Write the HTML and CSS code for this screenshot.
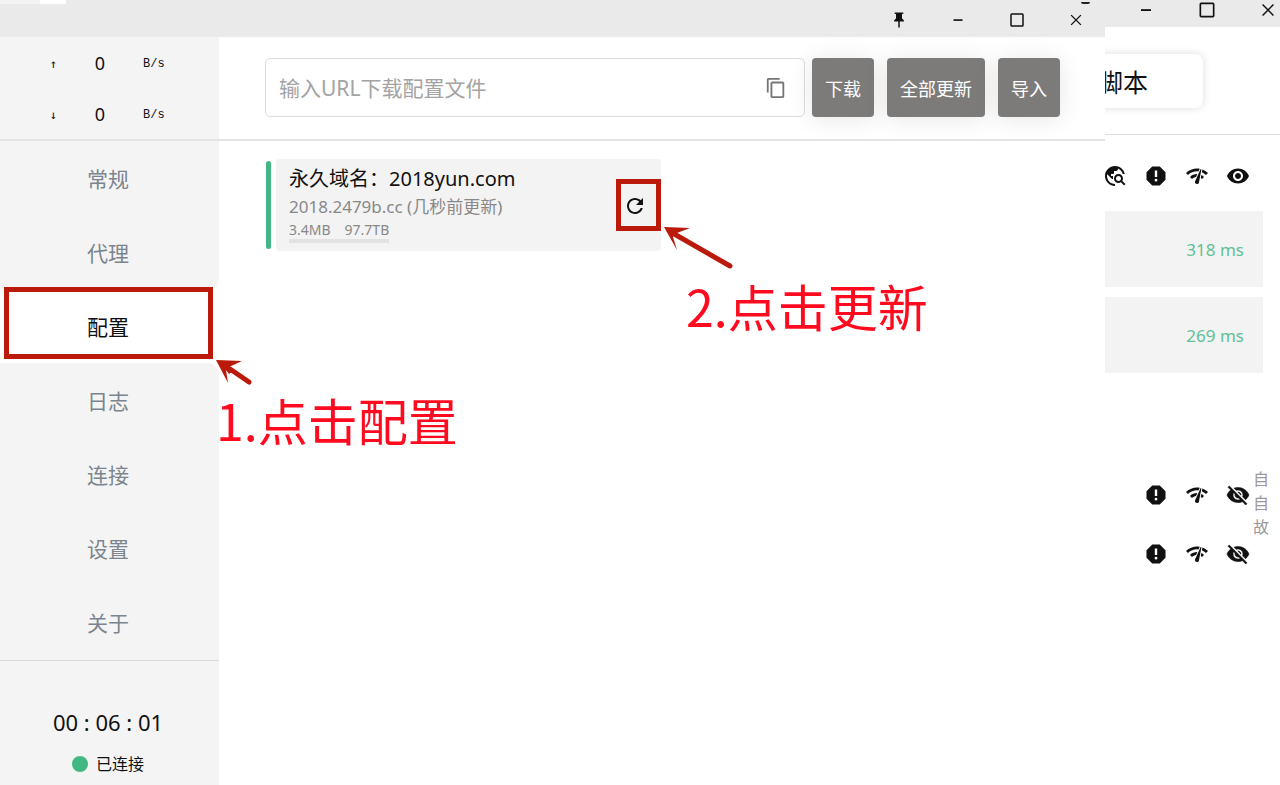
FILE: index.html
```html
<!DOCTYPE html>
<html lang="zh-CN">
<head>
<meta charset="utf-8">
<title>配置</title>
<link rel="stylesheet" href="styles.css">
</head>
<body>
<svg class="defs" aria-hidden="true">
  <symbol id="pin" viewBox="0 0 24 24"><path d="M16 10V4h1c.6 0 1-.5 1-1s-.4-1-1-1H7c-.6 0-1 .5-1 1s.4 1 1 1h1v6l-2.500 2.200V14H11v8h2v-8h5.500v-1.800z"/></symbol>
  <symbol id="min" viewBox="0 0 24 24"><path d="M6 11h12v2.200H6z"/></symbol>
  <symbol id="max" viewBox="0 0 24 24"><rect x="4" y="4" width="16" height="16" rx="1" fill="none" stroke="currentColor" stroke-width="2"/></symbol>
  <symbol id="close" viewBox="0 0 24 24"><path d="M5.500 5.500l13 13M18.500 5.500l-13 13" fill="none" stroke="currentColor" stroke-width="1.800"/></symbol>
  <symbol id="copy" viewBox="0 0 24 24"><path d="M16 1H4c-1.100 0-2 .9-2 2v14h2V3h12V1zm3 4H8c-1.100 0-2 .9-2 2v14c0 1.100.9 2 2 2h11c1.100 0 2-.9 2-2V7c0-1.100-.9-2-2-2zm0 16H8V7h11v14z"/></symbol>
  <symbol id="refresh" viewBox="0 0 24 24"><path d="M17.650 6.350C16.200 4.900 14.210 4 12 4c-4.420 0-7.990 3.580-7.990 8s3.570 8 7.990 8c3.730 0 6.840-2.550 7.730-6h-2.080c-.82 2.330-3.040 4-5.650 4-3.310 0-6-2.690-6-6s2.690-6 6-6c1.660 0 3.140.69 4.220 1.780L13 11h7V4l-2.350 2.350z"/></symbol>
  <symbol id="explore" viewBox="0 0 24 24"><path d="M19.300 16.900c.4-.7.7-1.500.7-2.400 0-2.500-2-4.500-4.500-4.500S11 12 11 14.500s2 4.500 4.500 4.500c.9 0 1.700-.3 2.400-.7l3.200 3.200 1.400-1.400-3.200-3.200zm-3.800.1c-1.400 0-2.500-1.100-2.500-2.500s1.100-2.500 2.500-2.500 2.500 1.100 2.500 2.500-1.100 2.500-2.500 2.500zM12 20v2C6.480 22 2 17.520 2 12S6.480 2 12 2c4.840 0 8.870 3.440 9.800 8h-2.070c-.64-2.460-2.400-4.470-4.730-5.410V5c0 1.100-.9 2-2 2h-2v2c0 .55-.45 1-1 1H8v2h2v3H9l-4.790-4.790C4.080 10.790 4 11.380 4 12c0 4.410 3.590 8 8 8z"/></symbol>
  <symbol id="report" viewBox="0 0 24 24"><path fill-rule="evenodd" d="M15.730 2.500H8.270L2.500 8.270v7.460l5.770 5.770h7.460l5.770-5.770V8.270zM12 17.600a1.400 1.400 0 1 1 0-2.800 1.400 1.400 0 0 1 0 2.800zM13.200 13h-2.400V6.500h2.400z"/></symbol>
  <symbol id="speed" viewBox="0 0 24 24"><path d="M15.900 5c-.17 0-.32.09-.41.23l-.07.15-5.180 11.650c-.16.29-.26.61-.26.96 0 1.110.9 2.010 2.010 2.010.96 0 1.770-.68 1.960-1.590l.01-.03L16.400 5.500c0-.28-.22-.5-.5-.5zM1 9l2 2c2.880-2.880 6.790-4.080 10.530-3.620l1.190-2.680C9.890 3.840 4.740 5.270 1 9zm20 2l2-2c-1.640-1.640-3.550-2.820-5.590-3.570l-.53 2.820c1.500.62 2.900 1.530 4.120 2.750zm-4 4l2-2c-.8-.8-1.700-1.420-2.660-1.890l-.55 2.920c.42.27.83.59 1.210.97zM5 13l2 2c1.130-1.130 2.560-1.790 4.030-2l1.280-2.880c-2.630-.08-5.300.87-7.310 2.880z"/></symbol>
  <symbol id="eye" viewBox="0 0 24 24"><path d="M12 4.500C7 4.500 2.730 7.610 1 12c1.730 4.390 6 7.500 11 7.500s9.270-3.110 11-7.500c-1.730-4.390-6-7.500-11-7.500zM12 17c-2.760 0-5-2.240-5-5s2.240-5 5-5 5 2.240 5 5-2.240 5-5 5zm0-8c-1.660 0-3 1.340-3 3s1.340 3 3 3 3-1.340 3-3-1.340-3-3-3z"/></symbol>
  <symbol id="eyeoff" viewBox="0 0 24 24"><path stroke="currentColor" stroke-width=".6" d="M12 7c2.760 0 5 2.240 5 5 0 .65-.13 1.260-.36 1.830l2.920 2.920c1.510-1.260 2.700-2.890 3.430-4.750-1.730-4.390-6-7.500-11-7.500-1.400 0-2.740.25-3.980.7l2.160 2.160C10.740 7.130 11.350 7 12 7zM2 4.270l2.280 2.280.46.46C3.080 8.300 1.780 10.020 1 12c1.730 4.390 6 7.500 11 7.500 1.550 0 3.030-.3 4.380-.84l.42.42L19.730 22 21 20.730 3.270 3 2 4.270zM7.530 9.800l1.550 1.550c-.05.21-.08.43-.08.65 0 1.660 1.340 3 3 3 .22 0 .44-.03.65-.08l1.550 1.550c-.67.33-1.410.53-2.200.53-2.760 0-5-2.240-5-5 0-.79.2-1.530.53-2.200zm4.310-.78l3.150 3.150.02-.16c0-1.660-1.340-3-3-3l-.17.01z"/></symbol>
</svg>

<div class="desktop">
  <section class="app">
    <header class="titlebar">
      <span class="tab-edge"></span>
      <span class="dash-edge"></span>
      <button class="win-btn" aria-label="置顶"><svg class="i18"><use href="#pin"/></svg></button>
      <button class="win-btn" aria-label="最小化"><svg class="i18"><use href="#min"/></svg></button>
      <button class="win-btn" aria-label="最大化"><svg class="i18"><use href="#max"/></svg></button>
      <button class="win-btn" aria-label="关闭"><svg class="i18"><use href="#close"/></svg></button>
    </header>

    <div class="body">
      <aside class="sidebar">
        <div class="traffic">
          <div class="rate"><span>↑</span><b>0</b><span>B/s</span></div>
          <div class="rate"><span>↓</span><b>0</b><span>B/s</span></div>
        </div>
        <nav class="nav">
          <a href="#general">常规</a>
          <a href="#proxies" class="before-active">代理</a>
          <a href="#profiles" class="active">配置</a>
          <a href="#logs" class="after-active">日志</a>
          <a href="#connections">连接</a>
          <a href="#settings">设置</a>
          <a href="#about">关于</a>
        </nav>
        <div class="status">
          <div class="clock">00 : 06 : 01</div>
          <div class="connected"><i class="dot"></i>已连接</div>
        </div>
      </aside>

      <main class="main">
        <form class="toolbar">
          <div class="url-box">
            <input type="text" placeholder="输入URL下载配置文件" aria-label="输入URL下载配置文件">
            <button type="button" class="copy" aria-label="粘贴"><svg class="i22"><use href="#copy"/></svg></button>
          </div>
          <div class="actions">
            <button type="button">下载</button>
            <button type="button">全部更新</button>
            <button type="button">导入</button>
          </div>
        </form>
        <article class="profile">
          <div class="mark"></div>
          <div class="card">
            <div class="info">
              <h2>永久域名：2018yun.com</h2>
              <p class="source">2018.2479b.cc (几秒前更新)</p>
              <p class="usage"><span>3.4MB</span><span>97.7TB</span></p>
            </div>
            <button class="refresh" aria-label="更新"><svg class="i24"><use href="#refresh"/></svg></button>
          </div>
        </article>
      </main>
    </div>

    <div class="frame frame-nav"></div>
    <div class="frame frame-refresh"></div>
    <svg class="arrow arrow-nav" viewBox="0 0 38 28"><path d="M33 23L14 10" stroke="#bb1a0b" stroke-width="5" stroke-linecap="round"/><path d="M0 1L26 2L13 8L17 12L13 15L10 11L12 24z" fill="#bb1a0b"/></svg>
    <svg class="arrow arrow-refresh" viewBox="0 0 72 44"><path d="M66 39L12 8" stroke="#bb1a0b" stroke-width="5" stroke-linecap="round"/><path d="M0 0L26 1L13 6L9 10L13 23z" fill="#bb1a0b"/></svg>
    <p class="note note-nav">1.点击配置</p>
    <p class="note note-refresh">2.点击更新</p>
  </section>

  <section class="back">
    <header class="back-bar">
      <button class="win-btn" aria-label="最小化"><svg class="i20"><use href="#min"/></svg></button>
      <button class="win-btn" aria-label="最大化"><svg class="i20"><use href="#max"/></svg></button>
      <button class="win-btn" aria-label="关闭"><svg class="i20"><use href="#close"/></svg></button>
    </header>
    <div class="modes"><button>脚本</button></div>
    <div class="tools tools-top">
      <svg class="i24"><use href="#explore"/></svg><svg class="i24"><use href="#report"/></svg><svg class="i24"><use href="#speed"/></svg><svg class="i24"><use href="#eye"/></svg>
    </div>
    <div class="nodes">
      <div class="node">318 ms</div>
      <div class="node">269 ms</div>
    </div>
    <div class="groups">
      <div class="tools">
        <svg class="i24"><use href="#report"/></svg><svg class="i24"><use href="#speed"/></svg><svg class="i24"><use href="#eyeoff"/></svg>
      </div>
      <div class="tools">
        <svg class="i24"><use href="#report"/></svg><svg class="i24"><use href="#speed"/></svg><svg class="i24"><use href="#eyeoff"/></svg>
      </div>
      <div class="anchors"><span>自</span><span>自</span><span>故</span></div>
    </div>
  </section>
</div>
</body>
</html>
```

FILE: styles.css
```css
* { box-sizing: border-box; }

body {
  margin: 0;
  background: #fff;
  color: #111;
  font-family: "Noto Sans", "Noto Sans CJK SC", sans-serif;
}

button {
  border: 0;
  padding: 0;
  background: none;
  color: inherit;
  font: inherit;
}

p, h2 { margin: 0; font-weight: 400; }

svg { display: block; flex: none; fill: currentColor; }
.defs { display: none; }
.i18 { width: 18px; height: 18px; }
.i20 { width: 20px; height: 20px; }
.i22 { width: 22px; height: 22px; }
.i24 { width: 24px; height: 24px; }

.desktop { display: flex; min-height: 100vh; overflow: hidden; }

/* front window */
.app {
  position: relative;
  flex: 1;
  min-width: 0;
  display: flex;
  flex-direction: column;
}

.titlebar {
  position: relative;
  height: 37px;
  display: flex;
  justify-content: flex-end;
  align-items: center;
  gap: 41px;
  padding: 3px 20px 0 0;
  background: #eaeaea;
}

.tab-edge {
  position: absolute;
  left: 0;
  top: 0;
  width: 66px;
  height: 4px;
  background: linear-gradient(90deg, #f3f3f3 40px, #fff 40px);
}

.dash-edge {
  position: absolute;
  right: 15px;
  top: 2px;
  width: 9px;
  height: 2px;
  border-radius: 0 0 2px 2px;
  background: #222;
}

.body { flex: 1; display: flex; }

.sidebar {
  flex: none;
  width: 219px;
  display: flex;
  flex-direction: column;
}

.traffic {
  height: 104px;
  border-bottom: 2px solid #e3e3e3;
  background: #f4f4f4;
}

.rate {
  height: 51px;
  display: grid;
  grid-template-columns: 12px 18px 24px;
  gap: 34px;
  align-items: center;
  padding-left: 45px;
  font-family: "Liberation Mono", "DejaVu Sans Mono", monospace;
  font-size: 12px;
}

.rate span { padding-top: 3px; }
.rate span:first-child { font-family: "DejaVu Sans Mono", monospace; text-align: right; }
.rate b { font: 400 18px "Noto Sans", sans-serif; text-align: center; }

.nav { height: 519px; display: flex; flex-direction: column; }

.nav a {
  flex: 1;
  display: flex;
  align-items: center;
  justify-content: center;
  padding: 0 3px 1px 0;
  background: #f4f4f4;
  color: #7b858e;
  font-size: 21px;
  text-decoration: none;
}

.nav .active { background: #fff; color: #111; }
.nav .before-active { border-bottom-right-radius: 12px; }
.nav .after-active { border-top-right-radius: 12px; }

.status {
  flex: 1;
  display: flex;
  flex-direction: column;
  align-items: center;
  gap: 12px;
  padding: 46px 3px 0 0;
  border-top: 1px solid #d8d8d8;
  background: #f4f4f4;
}

.clock { font-size: 22px; line-height: 30px; }
.connected { display: flex; align-items: center; gap: 8px; font-size: 16px; line-height: 30px; }
.dot { width: 16px; height: 16px; border-radius: 50%; background: #41b883; }

.main { flex: 1; min-width: 0; }

.toolbar {
  height: 104px;
  display: flex;
  align-items: flex-start;
  gap: 7px;
  padding: 21px 45px 0 46px;
  border-bottom: 2px solid #e3e3e3;
}

.url-box {
  flex: 1;
  height: 59px;
  display: flex;
  align-items: center;
  padding: 0 17px 0 13px;
  border: 1px solid #dcdcdc;
  border-radius: 5px;
}

.url-box input {
  flex: 1;
  min-width: 0;
  border: 0;
  padding: 0;
  outline: 0;
  background: none;
  font: inherit;
  font-size: 21px;
}

.url-box input::placeholder { color: #a3a3a3; opacity: 1; }
.copy { color: #757575; }

.actions { display: flex; gap: 13px; }

.actions button {
  height: 59px;
  padding: 0 13px;
  border-radius: 4px;
  background: #7d7b79;
  box-shadow: 0 2px 24px rgba(0, 0, 0, 0.1);
  color: #fff;
  font-size: 18px;
}

.profile { display: flex; gap: 5px; width: 395px; margin: 18px 0 0 47px; }
.mark { width: 5px; margin: 2px 0; border-radius: 3px; background: #41b883; }

.card {
  flex: 1;
  display: flex;
  align-items: center;
  justify-content: space-between;
  padding: 6px 14px 8px 13px;
  border-radius: 4px;
  background: #f3f3f3;
}

.card h2 { font-size: 20px; line-height: 28px; }
.source { color: #888; font-size: 17px; line-height: 28px; }

.usage {
  width: max-content;
  display: flex;
  gap: 14px;
  border-bottom: 4px solid #e2e2e2;
  color: #888;
  font-size: 14px;
  line-height: 18px;
}

.refresh { padding-top: 3px; }

/* annotations laid over the window */
.frame { position: absolute; border: 5px solid #bb1a0b; }
.frame-nav { left: 4px; top: 287px; width: 209px; height: 72px; }
.frame-refresh { left: 616px; top: 179px; width: 45px; height: 52px; }
.arrow { position: absolute; }
.arrow-nav { left: 216px; top: 359px; width: 38px; height: 28px; }
.arrow-refresh { left: 664px; top: 227px; width: 72px; height: 44px; }

.note {
  position: absolute;
  color: #ff0a1e;
  font-family: "Noto Sans CJK SC", sans-serif;
  font-size: 50px;
  line-height: 60px;
  white-space: nowrap;
}

.note-nav { left: 216px; top: 389px; }
.note-refresh { left: 686px; top: 275px; }

/* window behind */
.back { flex: none; width: 175px; overflow: hidden; }

.back-bar {
  height: 27px;
  display: flex;
  justify-content: flex-end;
  align-items: flex-start;
  gap: 41px;
  padding-right: 2px;
  background: #eaeaea;
}

.modes {
  height: 108px;
  display: flex;
  justify-content: flex-end;
  align-items: flex-start;
  padding: 27px 77px 0 0;
  border-bottom: 1px solid #dedede;
}

.modes button {
  flex: none;
  height: 54px;
  padding: 0 55px;
  border-radius: 8px;
  box-shadow: 0 0 8px rgba(0, 0, 0, 0.14);
  font-size: 25px;
}

.tools { display: flex; justify-content: flex-end; gap: 17px; padding-right: 30px; }
.tools-top { padding-top: 29px; }

.nodes { display: grid; gap: 10px; margin: 23px 17px 0 0; }

.node {
  height: 76px;
  display: flex;
  align-items: center;
  justify-content: flex-end;
  padding-right: 19px;
  background: #f3f3f3;
  color: #5fc196;
  font-size: 17px;
}

.groups { position: relative; display: grid; gap: 35px; margin-top: 110px; }

.anchors {
  position: absolute;
  right: 11px;
  top: -16px;
  display: grid;
  color: #999;
  font-size: 16px;
  line-height: 24px;
}
```
